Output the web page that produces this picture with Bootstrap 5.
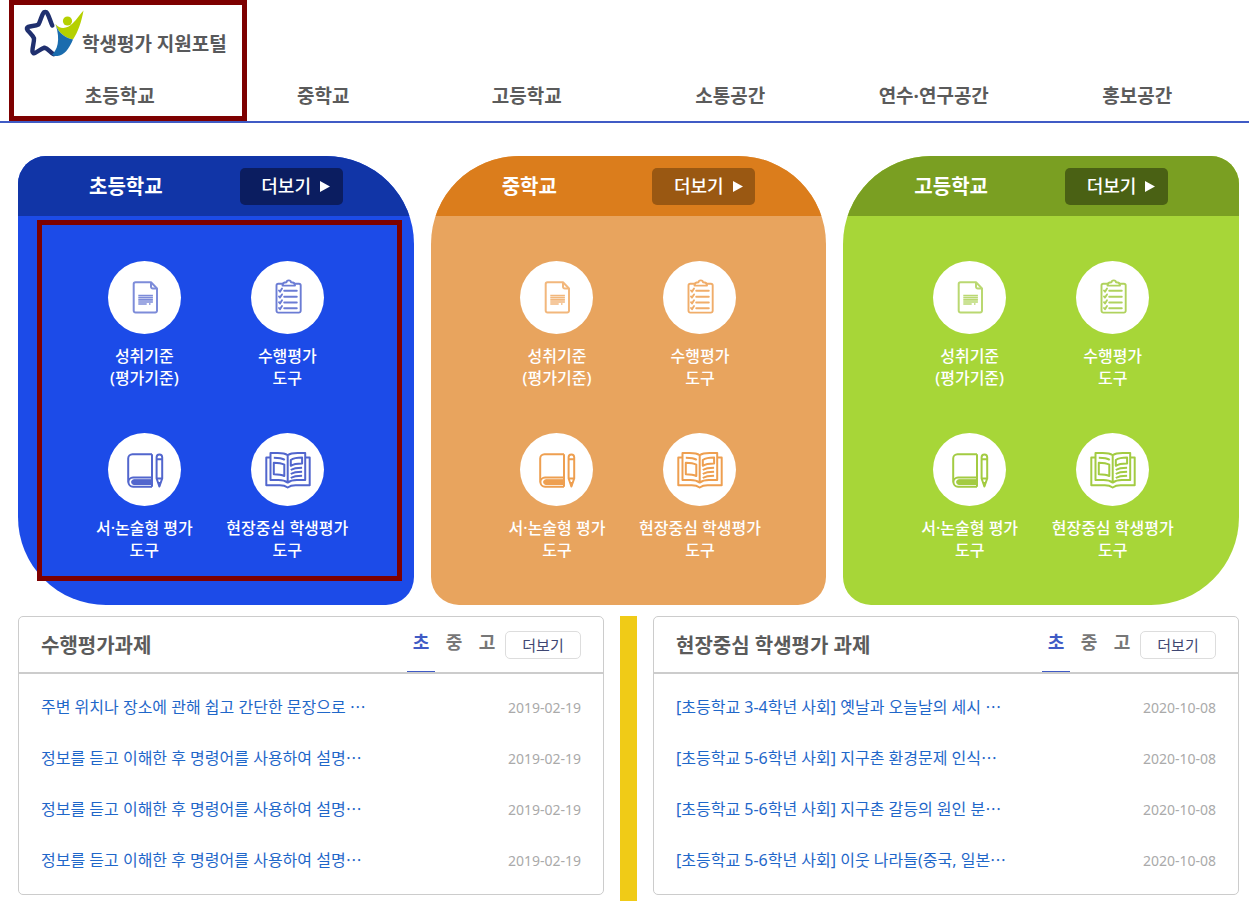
<!DOCTYPE html>
<html lang="ko">
<head>
<meta charset="utf-8">
<meta name="viewport" content="width=device-width, initial-scale=1">
<title>학생평가 지원포털</title>
<link rel="stylesheet" href="https://cdn.jsdelivr.net/npm/bootstrap@5.3.0/dist/css/bootstrap.min.css">
<style>
  body { font-family: "Noto Sans", "Noto Sans CJK KR", sans-serif; color: #5b5b5b; }
  a { text-decoration: none; }
  .page-pad { padding-left: 18px; padding-right: 10px; }
  .hl-box { position: absolute; border: 5px solid #7d0000; pointer-events: none; }

  .site-head { border-bottom: 2px solid #405bc5; }
  .site-head .hl-box { left: 9px; top: 0; bottom: 0; width: 238px; }
  .brand-link { padding: 8px 0 0 6px; height: 73px; color: #58595b; font-size: 19px; font-weight: 700; line-height: 28px; }
  .brand-link svg { width: 60px; height: 50px; }
  .brand-text { margin: 22px 0 0 -2px; }
  .main-nav { padding-bottom: 2px; }
  .main-nav .nav-link { padding: 10px 0; color: #5b5b5b; font-size: 19px; font-weight: 700; line-height: 26px; }

  .school-grid { display: grid; grid-template-columns: repeat(3, 1fr); gap: 17px; padding-top: 33px; }
  .school-in { overflow: hidden; background: var(--body-c); padding-bottom: 44px; }
  .school-head { height: 60px; padding: 0 71px; background: var(--head-c); }
  .school-head h2 { padding-top: 2px; font-size: 20px; font-weight: 700; line-height: 28px; }
  .more-btn { width: 103px; height: 37px; padding: 0 0 0 9px; gap: 9px; border-radius: 5px; background: var(--btn-c); color: #fff; font-size: 18px; font-weight: 500; border: 0; }
  .more-btn:hover { background: var(--btn-c); color: #fff; }
  .more-btn svg { width: 10px; height: 11px; }
  .tool-grid { display: grid; grid-template-columns: repeat(2, 143px); justify-content: center; row-gap: 44px; padding-top: 45px; }
  .tool-link { color: #fff; font-size: 16px; font-weight: 500; line-height: 22px; white-space: nowrap; }
  .tool-icon { width: 73px; height: 73px; margin-bottom: 11px; color: var(--icon-c); background: #fff; }
  .school-a { --head-c: #1135a7; --body-c: #1c4be8; --btn-c: #0b1d60; --icon-c: #5266cd; }
  .school-b { --head-c: #db7d1c; --body-c: #e8a45e; --btn-c: #9a5812; --icon-c: #ee9f50; }
  .school-c { --head-c: #7a9f22; --body-c: #a7d638; --btn-c: #4a6114; --icon-c: #a3cb42; }
  .school-a .school-in { border-radius: 28px 88px 28px 88px; }
  .school-b .school-in { border-radius: 88px 88px 28px 28px; }
  .school-c .school-in { border-radius: 88px 28px 88px 28px; }
  .school-a .hl-box { left: 19px; right: 12px; top: 64px; bottom: 24px; }

  .board-row { gap: 16px; padding-top: 11px; }
  .board-bar { width: 17px; background: #f0cb17; }
  .board { flex: 1 1 0; min-width: 0; margin-bottom: 6px; border: 1px solid #ccc; border-radius: 5px; }
  .board-head { height: 57px; padding: 0 22px; border-bottom: 2px solid #ccc; }
  .board-head h2 { padding-top: 2px; font-size: 20px; font-weight: 700; line-height: 54px; color: #5b5b5b; }
  .level-tabs { gap: 5px; }
  .level-tabs a { width: 28px; height: 55px; color: #777; font-size: 18px; font-weight: 700; line-height: 50px; text-align: center; }
  .level-tabs a.active { color: #405bc5; border-bottom: 1px solid #405bc5; }
  .list-btn { width: 76px; height: 28px; padding: 0; border: 1px solid #ddd; border-radius: 5px; color: #3e4672; font-size: 15px; line-height: 24px; }
  .board-list { padding: 8px 22px; }
  .board-list li { height: 51px; line-height: 51px; }
  .board-list a { color: #1f67c9; font-size: 16px; }
  .board-list time { color: #aaa; font-size: 14px; }
</style>
</head>
<body>
<svg class="d-none" aria-hidden="true">
  <symbol id="i-doc" viewBox="0 0 73 73">
    <g fill="none" stroke="currentColor" stroke-width="2" stroke-linejoin="round" opacity=".75">
      <path d="M27.500 21.300H43l6 6.200v22.300a1.800 1.800 0 0 1-1.800 1.800H27.500a1.800 1.800 0 0 1-1.800-1.800V23.100a1.800 1.800 0 0 1 1.800-1.800z"/>
      <path d="M43 21.300v4.400a1.800 1.800 0 0 0 1.800 1.800H49"/>
      <path stroke-width="1.700" d="M30.300 34.500h14.600M30.300 36.700h14.600M30.300 38.900h14.600M30.300 41h14.600M30.300 43h8.400M41 43h1.500"/>
    </g>
  </symbol>
  <symbol id="i-check" viewBox="0 0 73 73">
    <g fill="none" stroke="currentColor" stroke-width="1.900" stroke-linecap="round" stroke-linejoin="round" opacity=".85">
      <path d="M32 22.700h-4.700a1.800 1.800 0 0 0-1.800 1.800v25.300a1.800 1.800 0 0 0 1.800 1.800h20.600a1.800 1.800 0 0 0 1.800-1.800V24.500a1.800 1.800 0 0 0-1.800-1.800h-4.500"/>
      <path d="M31.500 24.600c0-2.600 1.300-3.300 4-3.300.2-2.600 4.300-2.600 4.500 0 2.700 0 4 .7 4 3.300z"/>
      <path d="M33.200 29.700h12.600M33.200 35.700h12.600M33.200 41.500h12.600M33.200 47.300h12.600"/>
      <path d="M28 29.500l1 1.200 2-3.200M28 35.400l1 1.200 2-3.200M28 41.200l1 1.200 2-3.200M28 47l1 1.200 2-3.200"/>
    </g>
  </symbol>
  <symbol id="i-book" viewBox="0 0 73 73">
    <g fill="none" stroke="currentColor" stroke-width="2" stroke-linejoin="round">
      <path d="M44 21.300H24.500a4.300 4.300 0 0 0-4.300 4.300v23.800M44 21.300V44.500M44 53.700H25a4.600 4.600 0 0 1 0-9.200h19M44 44.500v9.200"/>
      <path fill="currentColor" stroke-width="1" d="M44 46.700H26a2.400 2.400 0 0 0 0 4.800h18z"/>
      <path d="M48.600 45.500V24.200a2.800 2.800 0 0 1 5.600 0v21.300l-2.800 8zM48.600 26.300h5.600M48.600 45.500h5.600"/>
      <path fill="currentColor" stroke-width="1" d="M50.200 49.500h2.400l-1.200 4z"/>
    </g>
  </symbol>
  <symbol id="i-open" viewBox="0 0 73 73">
    <g fill="none" stroke="currentColor" stroke-width="2" stroke-linejoin="round">
      <path d="M19.300 24.500h-4v27.800h13.500c4 0 5.500.5 7.900 2.200 2.400-1.700 3.900-2.200 7.900-2.200h14.100V24.500h-4"/>
      <path d="M36.700 22.300c-3-2.200-6-2.200-10-2.200h-7.200v27h8c4.500 0 6.500.5 9.200 2.500 2.700-2 4.700-2.500 9.200-2.500h8.300v-27h-7.500c-4 0-7 0-10 2.200zM36.700 22.300v27.300"/>
      <path d="M22.800 24.700c4 0 8 .2 11 2.200M22.800 29.700c4.300 0 7.500.3 10.500 2V43c-3-1.500-6.200-1.700-10.500-1.700z"/>
      <path d="M39.800 27c3-2.200 6.800-2.500 11.300-2.500v6c-4.500 0-8.300.3-11.300 2.300zM39.800 37c3-2 6.800-2.300 11.300-2.300M39.800 41c3-2 6.800-2.300 11.300-2.300M39.800 45c3-2 6.800-2.300 11.300-2.300"/>
    </g>
  </symbol>
  <symbol id="i-play" viewBox="0 0 10 11"><path fill="currentColor" d="M0 0l10 5.500-10 5.500z"/></symbol>
</svg>

<header class="site-head position-relative page-pad">
  <a href="#" class="brand-link d-flex align-items-start">
    <svg viewBox="0 0 60 50" aria-hidden="true">
      <path fill="none" stroke="#20306f" stroke-width="4.400" stroke-linecap="round" stroke-linejoin="round" d="M28.300 17.500C26.500 14 25.500 9 23.300 5.300c-1-1.800-3.200-1.800-4.200 0C17.500 8 16.500 13 14.500 16.500c-3 1.500-7 1.300-10.300 2.300-1.500.6-1.700 2-.7 3.300 2.300 3 5.300 5.300 6.500 8.300.2 4-1.600 8.500-1.600 12.800 0 1.800 1.300 2.500 2.800 1.700 3.200-1.700 6-4.300 9.300-5.300 3.500.8 5.500 4.500 9 6.500"/>
      <path fill="#b5d000" d="M31.500 16c4.500 6 12.500 4.500 17-.5C53 11 56 6.500 59.500 2.500 57.500 14 54 24 49 31.500 41.500 30 34 25 31.500 16z"/>
      <path fill="#1a6cae" d="M31.500 16c2.500 9 10 14 17.500 15.500C45 41 40 47.500 33.500 48c-2.500.2-4.500-.3-5.500-1.500 5-4 9-14 3.500-30.500z"/>
      <circle cx="43.500" cy="13" r="4.600" fill="#b5d000"/>
    </svg>
    <span class="brand-text">학생평가 지원포털</span>
  </a>
  <nav class="main-nav" aria-label="주 메뉴">
    <ul class="nav nav-fill row row-cols-6 gx-0 text-center">
      <li class="col"><a class="nav-link" href="#">초등학교</a></li>
      <li class="col"><a class="nav-link" href="#">중학교</a></li>
      <li class="col"><a class="nav-link" href="#">고등학교</a></li>
      <li class="col"><a class="nav-link" href="#">소통공간</a></li>
      <li class="col"><a class="nav-link" href="#">연수·연구공간</a></li>
      <li class="col"><a class="nav-link" href="#">홍보공간</a></li>
    </ul>
  </nav>
  <div class="hl-box"></div>
</header>

<main class="page-pad">
  <div class="school-grid">
    <section class="school-a position-relative">
      <div class="school-in">
        <div class="school-head d-flex align-items-center justify-content-between text-white">
          <h2 class="m-0">초등학교</h2>
          <button type="button" class="btn more-btn d-flex align-items-center justify-content-center">더보기<svg><use href="#i-play"/></svg></button>
        </div>
        <div class="tool-grid text-center">
          <a class="tool-link" href="#"><svg class="tool-icon rounded-circle"><use href="#i-doc"/></svg><br>성취기준<br>(평가기준)</a>
          <a class="tool-link" href="#"><svg class="tool-icon rounded-circle"><use href="#i-check"/></svg><br>수행평가<br>도구</a>
          <a class="tool-link" href="#"><svg class="tool-icon rounded-circle"><use href="#i-book"/></svg><br>서·논술형 평가<br>도구</a>
          <a class="tool-link" href="#"><svg class="tool-icon rounded-circle"><use href="#i-open"/></svg><br>현장중심 학생평가<br>도구</a>
        </div>
      </div>
      <div class="hl-box"></div>
    </section>
    <section class="school-b">
      <div class="school-in">
        <div class="school-head d-flex align-items-center justify-content-between text-white">
          <h2 class="m-0">중학교</h2>
          <button type="button" class="btn more-btn d-flex align-items-center justify-content-center">더보기<svg><use href="#i-play"/></svg></button>
        </div>
        <div class="tool-grid text-center">
          <a class="tool-link" href="#"><svg class="tool-icon rounded-circle"><use href="#i-doc"/></svg><br>성취기준<br>(평가기준)</a>
          <a class="tool-link" href="#"><svg class="tool-icon rounded-circle"><use href="#i-check"/></svg><br>수행평가<br>도구</a>
          <a class="tool-link" href="#"><svg class="tool-icon rounded-circle"><use href="#i-book"/></svg><br>서·논술형 평가<br>도구</a>
          <a class="tool-link" href="#"><svg class="tool-icon rounded-circle"><use href="#i-open"/></svg><br>현장중심 학생평가<br>도구</a>
        </div>
      </div>
    </section>
    <section class="school-c">
      <div class="school-in">
        <div class="school-head d-flex align-items-center justify-content-between text-white">
          <h2 class="m-0">고등학교</h2>
          <button type="button" class="btn more-btn d-flex align-items-center justify-content-center">더보기<svg><use href="#i-play"/></svg></button>
        </div>
        <div class="tool-grid text-center">
          <a class="tool-link" href="#"><svg class="tool-icon rounded-circle"><use href="#i-doc"/></svg><br>성취기준<br>(평가기준)</a>
          <a class="tool-link" href="#"><svg class="tool-icon rounded-circle"><use href="#i-check"/></svg><br>수행평가<br>도구</a>
          <a class="tool-link" href="#"><svg class="tool-icon rounded-circle"><use href="#i-book"/></svg><br>서·논술형 평가<br>도구</a>
          <a class="tool-link" href="#"><svg class="tool-icon rounded-circle"><use href="#i-open"/></svg><br>현장중심 학생평가<br>도구</a>
        </div>
      </div>
    </section>
  </div>

  <div class="board-row d-flex">
    <section class="board">
      <div class="board-head d-flex align-items-center">
        <h2 class="m-0 me-auto">수행평가과제</h2>
        <nav class="level-tabs d-flex" aria-label="학교급">
          <a class="active" href="#">초</a><a href="#">중</a><a href="#">고</a>
        </nav>
        <button type="button" class="btn list-btn ms-1">더보기</button>
      </div>
      <ul class="board-list list-unstyled m-0">
        <li class="d-flex justify-content-between"><a class="text-truncate" href="#">주변 위치나 장소에 관해 쉽고 간단한 문장으로 ⋯</a><time>2019-02-19</time></li>
        <li class="d-flex justify-content-between"><a class="text-truncate" href="#">정보를 듣고 이해한 후 명령어를 사용하여 설명⋯</a><time>2019-02-19</time></li>
        <li class="d-flex justify-content-between"><a class="text-truncate" href="#">정보를 듣고 이해한 후 명령어를 사용하여 설명⋯</a><time>2019-02-19</time></li>
        <li class="d-flex justify-content-between"><a class="text-truncate" href="#">정보를 듣고 이해한 후 명령어를 사용하여 설명⋯</a><time>2019-02-19</time></li>
      </ul>
    </section>
    <div class="board-bar"></div>
    <section class="board">
      <div class="board-head d-flex align-items-center">
        <h2 class="m-0 me-auto">현장중심 학생평가 과제</h2>
        <nav class="level-tabs d-flex" aria-label="학교급">
          <a class="active" href="#">초</a><a href="#">중</a><a href="#">고</a>
        </nav>
        <button type="button" class="btn list-btn ms-1">더보기</button>
      </div>
      <ul class="board-list list-unstyled m-0">
        <li class="d-flex justify-content-between"><a class="text-truncate" href="#">[초등학교 3-4학년 사회] 옛날과 오늘날의 세시 ⋯</a><time>2020-10-08</time></li>
        <li class="d-flex justify-content-between"><a class="text-truncate" href="#">[초등학교 5-6학년 사회] 지구촌 환경문제 인식⋯</a><time>2020-10-08</time></li>
        <li class="d-flex justify-content-between"><a class="text-truncate" href="#">[초등학교 5-6학년 사회] 지구촌 갈등의 원인 분⋯</a><time>2020-10-08</time></li>
        <li class="d-flex justify-content-between"><a class="text-truncate" href="#">[초등학교 5-6학년 사회] 이웃 나라들(중국, 일본⋯</a><time>2020-10-08</time></li>
      </ul>
    </section>
  </div>
</main>
<script src="https://cdn.jsdelivr.net/npm/bootstrap@5.3.0/dist/js/bootstrap.bundle.min.js"></script>
</body>
</html>
